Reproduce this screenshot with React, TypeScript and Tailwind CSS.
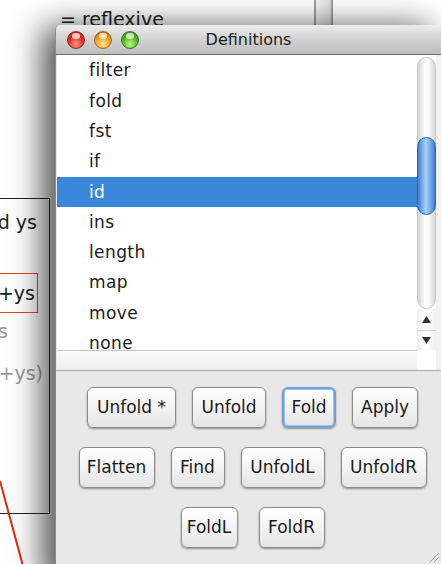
import React from "react";

const defs = ["filter", "fold", "fst", "if", "id", "ins", "length", "map", "move", "none"];

type Btn = { label: string; w: number; focus?: boolean };

const rows: { buttons: Btn[]; gap: string }[] = [
  {
    gap: "gap-[16px]",
    buttons: [
      { label: "Unfold *", w: 89 },
      { label: "Unfold", w: 74 },
      { label: "Fold", w: 54, focus: true },
      { label: "Apply", w: 66 },
    ],
  },
  {
    gap: "gap-[16px]",
    buttons: [
      { label: "Flatten", w: 76 },
      { label: "Find", w: 54 },
      { label: "UnfoldL", w: 84 },
      { label: "UnfoldR", w: 86 },
    ],
  },
  {
    gap: "gap-[21px]",
    buttons: [
      { label: "FoldL", w: 57 },
      { label: "FoldR", w: 66 },
    ],
  },
];

function Light({ color }: { color: "red" | "yellow" | "green" }) {
  const bg = {
    red: "bg-[radial-gradient(circle_at_50%_75%,#ff9a90_0%,#e4382c_45%,#a01a12_100%)] border-[#8a2a22]",
    yellow: "bg-[radial-gradient(circle_at_50%_75%,#ffe690_0%,#f3a62a_45%,#b4680e_100%)] border-[#9a6a20]",
    green: "bg-[radial-gradient(circle_at_50%_75%,#caf890_0%,#5cbe2e_45%,#2f7a12_100%)] border-[#3d7a22]",
  }[color];
  return (
    <div className={`relative w-[18px] h-[18px] rounded-full border ${bg}`}>
      <div className="absolute left-[4px] top-[1px] w-[8px] h-[6px] rounded-full bg-white/70" />
    </div>
  );
}

function Button({ label, w, focus }: Btn) {
  return (
    <div
      style={{ width: w }}
      className={`h-[41px] flex items-center justify-center rounded-[6px] text-[17px] text-[#1a1a1a] bg-[linear-gradient(#ffffff,#f3f3f3_50%,#e4e4e4)] shadow-[0_1px_2px_rgba(0,0,0,0.4)] ${
        focus ? "border-2 border-[#6e9fd9] ring-1 ring-inset ring-[#9fc2ea]" : "border border-[#8c8c8c]"
      }`}
    >
      {label}
    </div>
  );
}

export default function App() {
  return (
    <div className="relative w-[441px] h-[564px] overflow-hidden bg-white font-['DejaVu_Sans',sans-serif]">
      {/* document behind the window */}
      <div className="absolute left-[60px] top-[5px] text-[19px] text-[#222]">= reflexive</div>
      <div className="absolute left-[314px] top-0 w-[19px] h-[26px] border-x-2 border-[#a0a0a0] bg-[linear-gradient(90deg,#f4f4f4,#dcdcdc)]" />

      <div className="absolute left-[-100px] top-[198px] w-[150px] h-[316px] border border-[#222] text-[19px]">
        <span className="absolute right-[12px] top-[9px] text-[#1e1e1e]">d ys</span>
        <span className="absolute right-[11px] top-[74px] h-[40px] w-[140px] border border-[#e0452a]" />
        <span className="absolute right-[14px] top-[80px] text-[#1e1e1e]">+ys</span>
        <span className="absolute right-[41px] top-[118px] text-[#9a9a9a]">s</span>
        <span className="absolute right-[6px] top-[160px] text-[#9a9a9a]">+ys)</span>
      </div>

      <svg className="absolute left-0 top-[480px]" width="30" height="90">
        <line x1="0" y1="1" x2="23" y2="86" stroke="#e8260e" strokeWidth="2" />
      </svg>

      {/* Definitions window */}
      <div className="absolute left-[55px] top-[25px] w-[386px] h-[560px] flex flex-col rounded-t-[5px] bg-[#e8e8e8] shadow-[-12px_2px_32px_rgba(0,0,0,0.7)] border-l border-[#8a8a8a]">
        <div className="relative h-[30px] shrink-0 flex items-center pl-[11px] gap-[9px] rounded-t-[5px] bg-[linear-gradient(#ececec,#d2d2d2_50%,#bdbdbd)] border-b border-[#6f6f6f]">
          <Light color="red" />
          <Light color="yellow" />
          <Light color="green" />
          <div className="absolute inset-0 flex items-center justify-center text-[16px] text-[#1c1c1c]">
            Definitions
          </div>
        </div>

        <div className="flex h-[315px] shrink-0 ml-[1px] bg-white">
          <div className="flex flex-col w-[360px]">
            <div className="h-[295px] overflow-hidden pt-[1px]">
              {defs.map((d) => (
                <div
                  key={d}
                  className={`h-[30.3px] flex items-center pl-[32px] text-[17px] tracking-[0.4px] ${
                    d === "id" ? "bg-[#3a86db] text-white" : "text-[#1a1a1a]"
                  }`}
                >
                  {d}
                </div>
              ))}
            </div>
            <div className="h-[20px] border-t border-[#c4c4c4] bg-[linear-gradient(#fbfbfb,#ececec)]" />
          </div>

          <div className="flex flex-col w-[19px]">
            <div className="h-[252px] mt-[2px] relative rounded-full border border-[#c8c8c8] bg-[linear-gradient(90deg,#d4d4d4,#fbfbfb_40%,#fbfbfb_60%,#d6d6d6)]">
              <div className="absolute left-[-1px] right-[-1px] top-[79px] h-[78px] rounded-full border border-[#2f66b0] bg-[linear-gradient(90deg,#3f7fd0,#a8cff4_45%,#8fc0f0_60%,#3f7fd0)]" />
            </div>
            <div className="h-[22px] flex items-center justify-center border-b border-[#d0d0d0] bg-[linear-gradient(90deg,#efefef,#ffffff,#efefef)]">
              <svg width="9" height="7"><polygon points="4.5,0 9,7 0,7" fill="#333" /></svg>
            </div>
            <div className="h-[19px] flex items-center justify-center bg-[linear-gradient(90deg,#efefef,#ffffff,#efefef)]">
              <svg width="9" height="7"><polygon points="0,0 9,0 4.5,7" fill="#333" /></svg>
            </div>
            <div className="flex-1 bg-white" />
          </div>
          <div className="flex-1 bg-[#f2f2f2]" />
        </div>

        <div className="relative flex-1 border-t border-[#a8a8a8] bg-[#e8e8e8] pt-[16px] pl-[8px] flex flex-col items-center gap-[19px]">
          {rows.map((r, i) => (
            <div key={i} className={`flex ${r.gap}`}>
              {r.buttons.map((b) => (
                <Button key={b.label} {...b} />
              ))}
            </div>
          ))}
        </div>
      </div>

      {/* resize grip */}
      <svg className="absolute left-[428px] top-[551px]" width="12" height="12">
        <line x1="11" y1="2" x2="2" y2="11" stroke="#9a9a9a" />
        <line x1="11" y1="6" x2="6" y2="11" stroke="#9a9a9a" />
      </svg>
    </div>
  );
}
